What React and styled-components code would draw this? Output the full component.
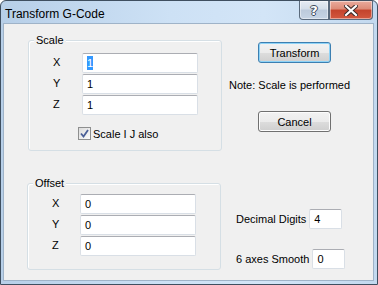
import styled, { createGlobalStyle } from 'styled-components';

const Global = createGlobalStyle`
  html, body {
    margin: 0;
    padding: 0;
    background: #ffffff;
  }
  body {
    font-family: "Liberation Sans", Arial, sans-serif;
    font-size: 11px;
    color: #000;
  }
`;

const Window = styled.div`
  box-sizing: border-box;
  width: 378px;
  height: 285px;
  border: 1px solid #3f4f60;
  border-radius: 6px 6px 0 0;
  padding: 0 3px 3px 2px;
  background: linear-gradient(to right, #b7cfe8 0%, #cde1f5 45%, #d3e5f7 70%, #c3d9ef 100%);
  display: flex;
  flex-direction: column;
`;

const TitleBar = styled.div`
  height: 22px;
  display: flex;
  align-items: flex-start;
  justify-content: space-between;
`;

const Title = styled.div`
  font-size: 12px;
  line-height: 14px;
  margin: 6px 0 0 2px;
  color: #000;
`;

const Caption = styled.div`
  display: flex;
  margin-right: 1px;
`;

const CapButton = styled.div`
  box-sizing: border-box;
  height: 19px;
  width: ${p => p.$w}px;
  display: flex;
  align-items: center;
  justify-content: center;
  border: 1px solid #5a6a7c;
  border-top: none;
  border-radius: ${p => p.$r};
  background: ${p =>
    p.$close
      ? 'linear-gradient(#e9ab9d 0%, #dc8a76 45%, #c4432c 50%, #d2583f 100%)'
      : 'linear-gradient(#e6ecf3 0%, #d4dee9 45%, #bccadb 50%, #c6d4e4 100%)'};
  box-shadow: inset 0 0 0 1px rgba(255, 255, 255, 0.45);
`;

const HelpGlyph = styled.span`
  font-family: "DejaVu Sans", sans-serif;
  font-weight: bold;
  font-size: 13px;
  color: #fff;
  text-shadow: 1px 0 #3b4a5c, -1px 0 #3b4a5c, 0 1px #3b4a5c, 0 -1px #3b4a5c;
  line-height: 1;
`;

const Client = styled.div`
  flex: 1;
  background: #f0f0f0;
  border: 1px solid #9fb3c8;
  display: flex;
`;

const LeftCol = styled.div`
  display: flex;
  flex-direction: column;
  margin-left: 24px;
  padding-top: 16px;
`;

const GroupBox = styled.div`
  box-sizing: border-box;
  width: 194px;
  height: ${p => p.$h}px;
  margin-top: ${p => p.$mt || 0}px;
  margin-left: ${p => p.$ml || 0}px;
  border: 1px solid #d5dfe5;
  border-radius: 3px;
  box-shadow: inset 1px 1px 0 #ffffff;
`;

const Legend = styled.div`
  width: fit-content;
  margin: -7px 0 0 5px;
  padding: 0 2px;
  line-height: 13px;
  background: #f0f0f0;
`;

const FieldGrid = styled.div`
  display: grid;
  grid-template-columns: ${p => p.$lw}px 116px;
  grid-auto-rows: 20px;
  row-gap: 1px;
  margin-top: ${p => p.$top}px;
  padding-left: 24px;
  align-items: center;
`;

const Label = styled.span`
  line-height: 13px;
  margin-top: -2px;
`;

const TextBox = styled.div`
  box-sizing: border-box;
  width: ${p => p.$w || 116}px;
  height: ${p => p.$h || 20}px;
  background: #fff;
  border: 1px solid #d9dfe6;
  border-top-color: #abadb3;
  border-left-color: #dbe0e6;
  border-radius: 2px;
  padding-left: 4px;
  display: flex;
  align-items: center;
`;

const Selected = styled.span`
  background: #3399ff;
  color: #fff;
  line-height: 14px;
`;

const CheckRow = styled.div`
  display: flex;
  align-items: center;
  gap: 2px;
  margin: 12px 0 0 49px;
`;

const CheckBox = styled.div`
  box-sizing: border-box;
  width: 13px;
  height: 13px;
  border: 1px solid #8e8f8f;
  background: linear-gradient(135deg, #dcdcdc, #fbfbfb);
  display: flex;
  align-items: center;
  justify-content: center;
`;

const RightCol = styled.div`
  display: flex;
  flex-direction: column;
  padding-top: 18px;
`;

const Button = styled.div`
  box-sizing: border-box;
  width: 73px;
  height: 21px;
  margin-left: 36px;
  margin-top: ${p => p.$mt || 0}px;
  display: flex;
  align-items: center;
  justify-content: center;
  border: 1px solid ${p => (p.$default ? '#3c7fb1' : '#707070')};
  border-radius: 3px;
  background: linear-gradient(#f2f2f2 0%, #ebebeb 50%, #dddddd 51%, #cfcfcf 100%);
  box-shadow: inset 0 0 0 1px ${p => (p.$default ? '#8ed3f7' : '#fcfcfc')};
`;

const Note = styled.div`
  margin: 16px 0 0 7px;
  line-height: 13px;
`;

const OptionRow = styled.div`
  display: flex;
  align-items: center;
  gap: 3px;
  margin: ${p => p.$mt}px 0 0 14px;
`;

function ScaleFields() {
  return (
    <FieldGrid $lw={29} $top={6}>
      <Label>X</Label>
      <TextBox>
        <Selected>1</Selected>
      </TextBox>
      <Label>Y</Label>
      <TextBox>1</TextBox>
      <Label>Z</Label>
      <TextBox>1</TextBox>
    </FieldGrid>
  );
}

export default function App() {
  return (
    <>
      <Global />
      <Window>
        <TitleBar>
          <Title>Transform G-Code</Title>
          <Caption>
            <CapButton $w={30} $r="0 0 0 4px">
              <HelpGlyph>?</HelpGlyph>
            </CapButton>
            <CapButton $w={44} $r="0 0 4px 0" $close>
              <svg width="14" height="11" viewBox="0 0 14 11">
                <path
                  d="M2 1 L12 10 M12 1 L2 10"
                  stroke="#3b2a28"
                  strokeWidth="4.2"
                  strokeLinecap="square"
                />
                <path
                  d="M2 1 L12 10 M12 1 L2 10"
                  stroke="#ffffff"
                  strokeWidth="2.2"
                  strokeLinecap="square"
                />
              </svg>
            </CapButton>
          </Caption>
        </TitleBar>
        <Client>
          <LeftCol>
            <GroupBox $h={111}>
              <Legend>Scale</Legend>
              <ScaleFields />
              <CheckRow>
                <CheckBox>
                  <svg width="9" height="9" viewBox="0 0 9 9">
                    <path d="M1 4.5 L3.5 7.5 L8 1" fill="none" stroke="#4a5f97" strokeWidth="1.8" />
                  </svg>
                </CheckBox>
                <span>Scale I J also</span>
              </CheckRow>
            </GroupBox>
            <GroupBox $h={87} $mt={32} $ml={-1}>
              <Legend>Offset</Legend>
              <FieldGrid $lw={28} $top={4}>
                <Label>X</Label>
                <TextBox>0</TextBox>
                <Label>Y</Label>
                <TextBox>0</TextBox>
                <Label>Z</Label>
                <TextBox>0</TextBox>
              </FieldGrid>
            </GroupBox>
          </LeftCol>
          <RightCol>
            <Button $default>Transform</Button>
            <Note>Note: Scale is performed</Note>
            <Button $mt={19}>Cancel</Button>
            <OptionRow $mt={77}>
              <span>Decimal Digits</span>
              <TextBox $w={33}>4</TextBox>
            </OptionRow>
            <OptionRow $mt={20}>
              <span>6 axes Smooth</span>
              <TextBox $w={33}>0</TextBox>
            </OptionRow>
          </RightCol>
        </Client>
      </Window>
    </>
  );
}
